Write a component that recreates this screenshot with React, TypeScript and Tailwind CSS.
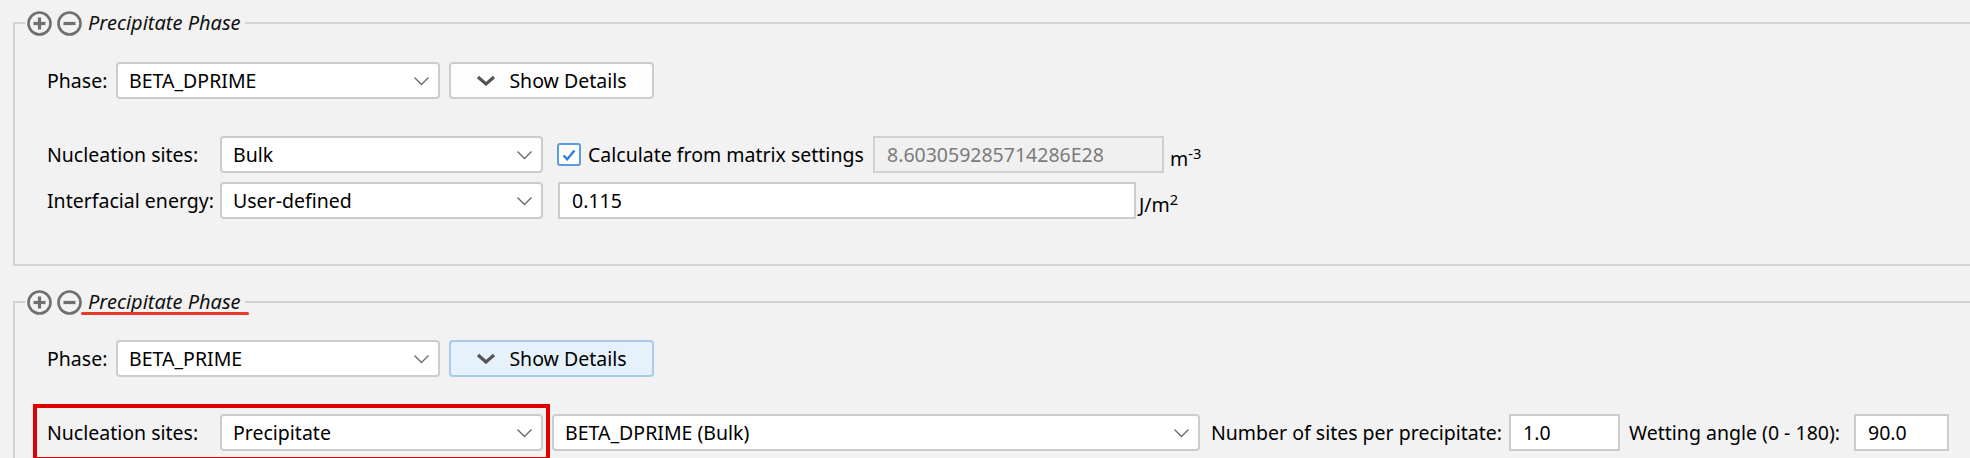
import React from "react";

function Chevron() {
  return (
    <svg width="17" height="10" viewBox="0 0 17 10" className="shrink-0">
      <polyline points="1.5,1.5 8.5,8.5 15.5,1.5" fill="none" stroke="#6b6b6b" strokeWidth="1.4" />
    </svg>
  );
}

function Combo({ value, w }: { value: string; w: string }) {
  return (
    <div className={`${w} h-[37px] shrink-0 flex items-center justify-between rounded-[4px] border-2 border-[#cccccc] bg-white pl-[11px] pr-[8px]`}>
      <span className="whitespace-nowrap">{value}</span>
      <Chevron />
    </div>
  );
}

function TextInput({ value, w, disabled = false }: { value: string; w: string; disabled?: boolean }) {
  return (
    <div
      className={`${w} h-[37px] shrink-0 flex items-center border-2 pl-[12px] ${
        disabled ? "bg-[#f0f0f0] border-[#d0d0d0] text-[#7b7b7b]" : "bg-white border-[#cccccc]"
      }`}
    >
      {value}
    </div>
  );
}

function DetailsButton({ active = false }: { active?: boolean }) {
  return (
    <div
      className={`w-[205px] h-[37px] shrink-0 ml-[9px] flex items-center justify-center gap-[13px] rounded-[4px] border-2 ${
        active ? "bg-[#e5f1fb] border-[#a9caec]" : "bg-[#fdfdfd] border-[#cccccc]"
      }`}
    >
      <svg width="20" height="11" viewBox="0 0 20 11">
        <polyline points="2,2 10,9 18,2" fill="none" stroke="#555555" strokeWidth="3.2" />
      </svg>
      <span>Show Details</span>
    </div>
  );
}

function CircleIcon({ plus }: { plus: boolean }) {
  return (
    <svg width="25" height="25" viewBox="0 0 25 25" className="shrink-0">
      <circle cx="12.5" cy="12.5" r="11" fill="none" stroke="#6f6f6f" strokeWidth="2.6" />
      <line x1="6.5" y1="12.5" x2="18.5" y2="12.5" stroke="#6f6f6f" strokeWidth="3.2" />
      {plus && <line x1="12.5" y1="6.5" x2="12.5" y2="18.5" stroke="#6f6f6f" strokeWidth="3.2" />}
    </svg>
  );
}

function Header({ marked = false }: { marked?: boolean }) {
  return (
    <legend className="ml-[10px] px-[2px]">
      <div className="flex items-center h-[30px]">
        <CircleIcon plus />
        <div className="ml-[5px]">
          <CircleIcon plus={false} />
        </div>
        <span className="relative ml-[6px] h-[30px] leading-[30px] text-[20px] italic text-[#111111] pr-[2px]">
          Precipitate Phase
          {/* red annotation under the title */}
          {marked && <span className="absolute -left-[7px] -right-[6px] bottom-[2px] h-[3px] rounded-full bg-[#e8392b]" />}
        </span>
      </div>
    </legend>
  );
}

function Unit({ base, sup }: { base: string; sup: string }) {
  return (
    <span className="self-end mb-[4px] leading-[20px] whitespace-nowrap">
      {base}
      <sup>{sup}</sup>
    </span>
  );
}

export default function App() {
  return (
    <div className="h-[458px] w-full overflow-hidden bg-[#f2f2f2] pt-[8px] font-['Segoe_UI','Noto_Sans',sans-serif] text-[19.5px] text-black">
      {/* first precipitate phase */}
      <fieldset className="ml-[13px] border-2 border-r-0 border-[#d3d3d3] pt-[24px] pb-[45px]">
        <Header />
        <div className="flex items-center h-[37px] pl-[32px]">
          <span className="w-[69px] shrink-0">Phase:</span>
          <Combo value="BETA_DPRIME" w="w-[324px]" />
          <DetailsButton />
        </div>

        <div className="flex items-center h-[37px] pl-[32px] mt-[37px]">
          <span className="w-[173px] shrink-0 whitespace-nowrap">Nucleation sites:</span>
          <Combo value="Bulk" w="w-[323px]" />
          <div className="ml-[14px] w-[24px] h-[23px] shrink-0 flex items-center justify-center rounded-[3px] border-2 border-[#5b9be0] bg-white">
            <svg width="16" height="14" viewBox="0 0 16 14">
              <polyline points="2.5,7.5 6.2,11.2 13.5,2.5" fill="none" stroke="#2f80d8" strokeWidth="2.4" />
            </svg>
          </div>
          <span className="ml-[7px] w-[285px] shrink-0 whitespace-nowrap">Calculate from matrix settings</span>
          <TextInput value="8.603059285714286E28" w="w-[291px]" disabled />
          <span className="ml-[6px] flex self-stretch">
            <Unit base="m" sup="-3" />
          </span>
        </div>

        <div className="flex items-center h-[37px] pl-[32px] mt-[9px]">
          <span className="w-[173px] shrink-0 whitespace-nowrap">Interfacial energy:</span>
          <Combo value="User-defined" w="w-[323px]" />
          <div className="ml-[15px]">
            <TextInput value="0.115" w="w-[578px]" />
          </div>
          <span className="ml-[3px] flex self-stretch">
            <Unit base="J/m" sup="2" />
          </span>
        </div>
      </fieldset>

      {/* second precipitate phase */}
      <fieldset className="ml-[13px] mt-[21px] border-2 border-r-0 border-[#d3d3d3] pt-[23px] pb-[40px]">
        <Header marked />
        <div className="flex items-center h-[37px] pl-[32px]">
          <span className="w-[69px] shrink-0">Phase:</span>
          <Combo value="BETA_PRIME" w="w-[324px]" />
          <DetailsButton active />
        </div>

        <div className="flex items-center h-[37px] pl-[32px] mt-[37px]">
          <div className="relative flex items-center">
            <span className="w-[173px] shrink-0 whitespace-nowrap">Nucleation sites:</span>
            <Combo value="Precipitate" w="w-[323px]" />
            {/* red annotation frame */}
            <span className="pointer-events-none absolute -left-[14px] -right-[7px] -top-[10px] -bottom-[10px] border-[4px] border-[#e00000]" />
          </div>
          <div className="ml-[9px]">
            <Combo value="BETA_DPRIME (Bulk)" w="w-[648px]" />
          </div>
          <span className="ml-[11px] w-[298px] shrink-0 whitespace-nowrap">Number of sites per precipitate:</span>
          <TextInput value="1.0" w="w-[111px]" />
          <span className="ml-[9px] w-[225px] shrink-0 whitespace-nowrap">Wetting angle (0 - 180):</span>
          <TextInput value="90.0" w="w-[95px]" />
        </div>
      </fieldset>
    </div>
  );
}
